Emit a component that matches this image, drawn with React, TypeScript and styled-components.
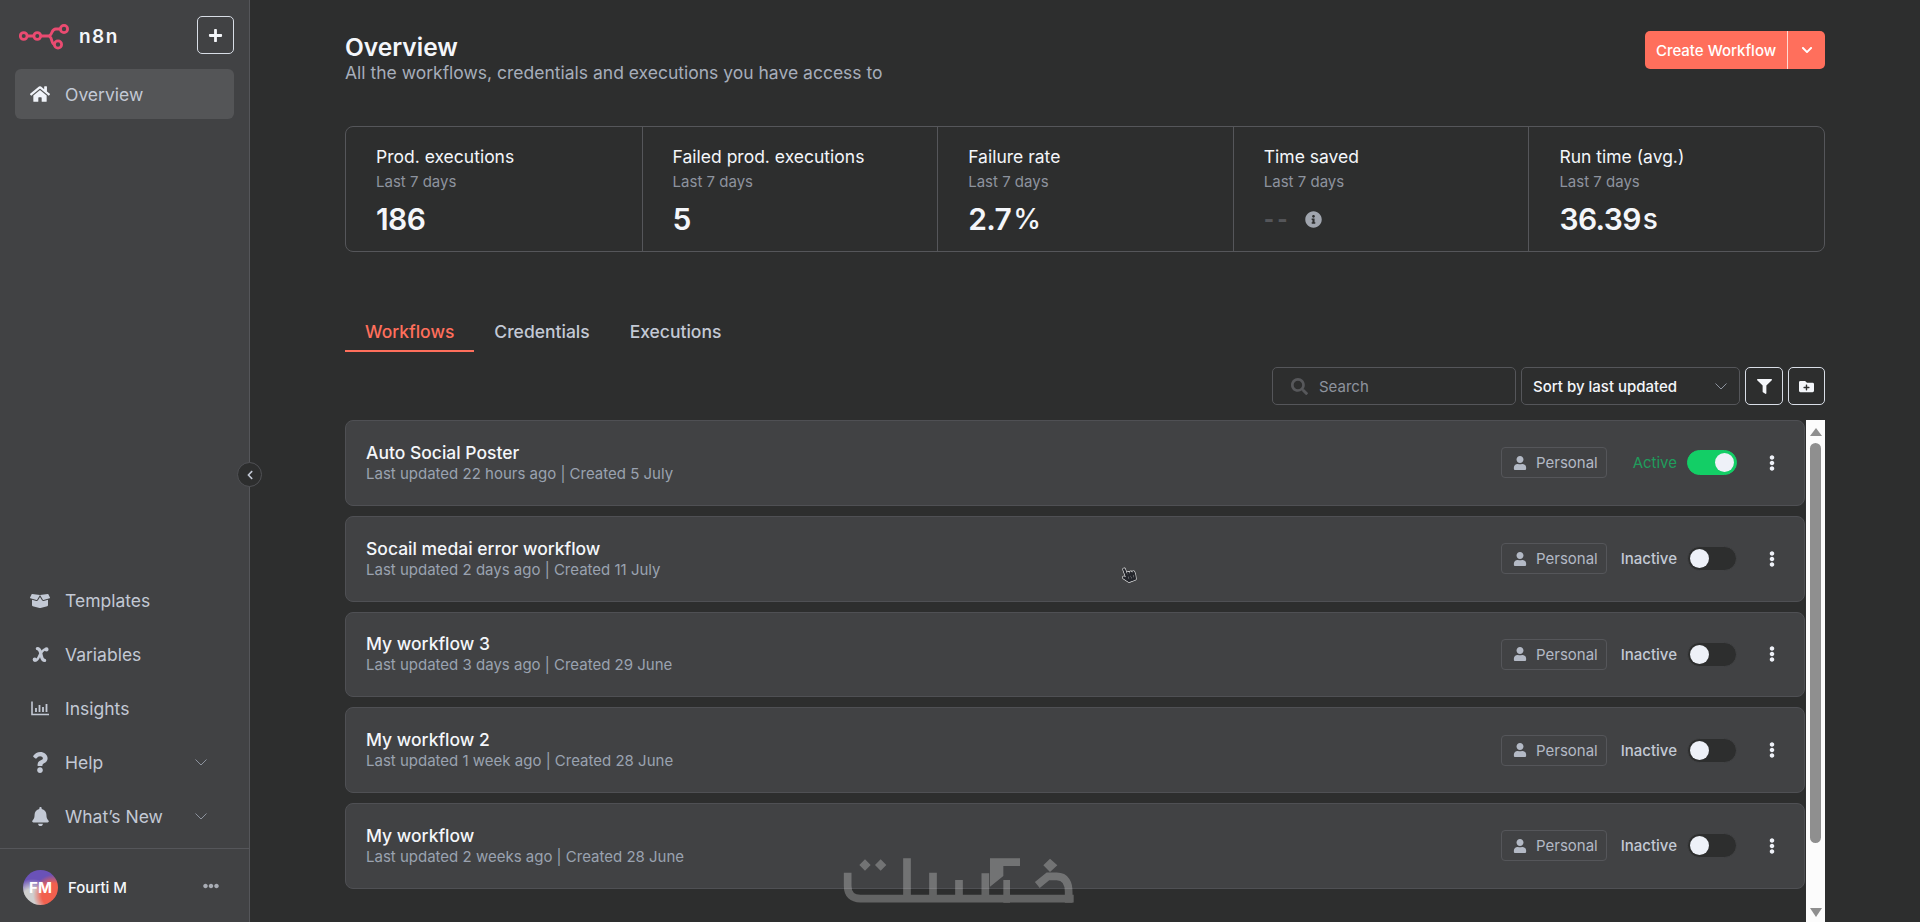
import React from "react";
import styled, { createGlobalStyle } from "styled-components";
import {
  FaHome, FaBoxOpen, FaQuestion, FaBell, FaPlus, FaChevronDown, FaUser, FaEllipsisV,
  FaFilter, FaFolderPlus, FaInfoCircle, FaSearch, FaChevronLeft, FaEllipsisH, FaHandPointer,
} from "react-icons/fa";

const Global = createGlobalStyle`
  html, body { margin: 0; padding: 0; height: 100%; overflow: hidden; background: #2d2e2e; }
  * { box-sizing: border-box; }
  body { font-family: Inter, "Liberation Sans", sans-serif; color: #f4f6fa; }
`;

const Page = styled.div`
  position: relative;
  display: flex;
  width: 100vw;
  height: 100vh;
  overflow: hidden;
  background: #2d2e2e;
`;

const Sidebar = styled.aside`
  width: 250px;
  flex: none;
  display: flex;
  flex-direction: column;
  background: #414244;
  border-right: 1px solid #55565a;
`;

const SideTop = styled.div`
  height: 69px;
  flex: none;
  display: flex;
  align-items: flex-start;
  justify-content: space-between;
  padding: 16px 15px 0 19px;
`;

const Brand = styled.div`
  display: flex;
  align-items: center;
  gap: 10px;
  height: 40px;
`;

const BrandName = styled.span`
  font-size: 19px;
  font-weight: 600;
  letter-spacing: 1.5px;
  color: #f4f6fa;
`;

const OutlineButton = styled.button<{ $w?: number }>`
  width: ${(p) => p.$w ?? 38}px;
  height: 38px;
  padding: 0;
  display: flex;
  align-items: center;
  justify-content: center;
  background: transparent;
  border: 1px solid #d8dde6;
  border-radius: 5px;
  color: #f4f6fa;
`;

const NavActive = styled.div`
  height: 50px;
  margin: 0 15px;
  padding-left: 15px;
  display: flex;
  align-items: center;
  gap: 15px;
  background: #545557;
  border-radius: 6px;
  font-size: 17.5px;
  color: #c3c9d5;
`;

const NavIcon = styled.span`
  width: 20px;
  flex: none;
  display: flex;
  align-items: center;
  justify-content: center;
  color: #c3c9d5;
`;

const HomeIcon = styled(NavIcon)`
  color: #f0f3f9;
`;

const Spacer = styled.div`
  flex: 1;
`;

const NavList = styled.nav`
  display: flex;
  flex-direction: column;
  padding-bottom: 5px;
`;

const NavItem = styled.div`
  height: 53.8px;
  padding: 0 42px 0 30px;
  display: flex;
  align-items: center;
  gap: 15px;
  font-size: 17.5px;
  color: #c3c9d5;
`;

const NavLabel = styled.span`
  flex: 1;
`;

const ThinChevron = styled.svg`
  width: 12px;
  height: 7px;
  fill: none;
  stroke: #8d939e;
  stroke-width: 1;
`;

const SideFooter = styled.div`
  height: 74px;
  flex: none;
  display: flex;
  align-items: center;
  padding: 0 30px 0 23px;
  gap: 10px;
  border-top: 1px solid #55565a;
`;

const Avatar = styled.div`
  width: 35px;
  height: 35px;
  margin-top: 3px;
  border-radius: 50%;
  display: flex;
  align-items: center;
  justify-content: center;
  font-size: 15px;
  font-weight: 700;
  color: #fff;
  background:
    radial-gradient(circle at 88% 72%, #f2604e 0 30%, transparent 52%),
    radial-gradient(circle at 28% 88%, #cfcfcf 0 30%, transparent 55%),
    linear-gradient(180deg, #6a52b8 0 50%, #a98a9c 100%);
`;

const UserName = styled.span`
  flex: 1;
  margin-top: 3px;
  font-size: 15px;
  font-weight: 500;
  color: #f4f6fa;
`;

const UserMore = styled.span`
  display: flex;
  color: #a8acb4;
`;

const Collapse = styled.button`
  position: absolute;
  left: 237px;
  top: 462px;
  width: 25px;
  height: 25px;
  padding: 0;
  border-radius: 50%;
  display: flex;
  align-items: center;
  justify-content: center;
  background: #2d2e2e;
  border: 1px solid #505155;
  color: #c3c9d5;
`;

const Main = styled.main`
  flex: 1;
  min-width: 0;
  display: flex;
  flex-direction: column;
  padding: 31px 95px 0 95px;
`;

const Header = styled.header`
  height: 95px;
  flex: none;
  display: flex;
  align-items: flex-start;
  justify-content: space-between;
`;

const HeaderText = styled.div`
  padding-top: 2px;
`;

const Title = styled.h1`
  margin: 0;
  font-size: 24.5px;
  line-height: 28px;
  font-weight: 600;
  color: #f4f6fa;
`;

const Subtitle = styled.p`
  margin: 2px 0 0;
  font-size: 17.5px;
  line-height: 20px;
  color: #a6adba;
`;

const SplitButton = styled.div`
  width: 180px;
  height: 38px;
  display: flex;
  background: #ff6f5c;
  border-radius: 5px;
  color: #fff;
`;

const SplitLabel = styled.span`
  flex: 1;
  display: flex;
  align-items: center;
  justify-content: center;
  font-size: 15px;
  font-weight: 500;
  border-right: 1px solid #ffd9d2;
`;

const SplitArrow = styled.span`
  width: 37px;
  display: flex;
  align-items: center;
  justify-content: center;
`;

const Stats = styled.section`
  height: 126px;
  flex: none;
  display: grid;
  grid-template-columns: repeat(5, 1fr);
  border: 1px solid #55565a;
  border-radius: 8px;
`;

const Stat = styled.div`
  padding: 18px 0 0 30px;
  & + & {
    border-left: 1px solid #55565a;
  }
`;

const StatTitle = styled.div`
  font-size: 17.5px;
  line-height: 24px;
  font-weight: 400;
  color: #f4f6fa;
`;

const StatSub = styled.div`
  font-size: 15px;
  line-height: 20px;
  margin-top: 3px;
  color: #8d939e;
`;

const StatValue = styled.div`
  display: flex;
  align-items: center;
  height: 40px;
  margin-top: 7px;
  font-size: 30px;
  font-weight: 600;
  letter-spacing: -0.6px;
  color: #f4f6fa;
`;

const Unit = styled.span`
  font-size: 28px;
  font-weight: 500;
  margin-left: 2px;
`;

const Dashes = styled.span`
  font-size: 22px;
  font-weight: 800;
  letter-spacing: 3px;
  color: #55565a;
  margin-right: 14px;
`;

const InfoWrap = styled.span`
  display: flex;
  color: #a0a5ae;
`;

const Tabs = styled.div`
  margin-top: 60px;
  height: 40px;
  flex: none;
  display: flex;
`;

const Tab = styled.div<{ $active?: boolean }>`
  padding: 0 20px;
  display: flex;
  align-items: center;
  font-size: 17.5px;
  font-weight: 500;
  color: ${(p) => (p.$active ? "#ff6f5c" : "#c3c9d5")};
  border-bottom: 2px solid ${(p) => (p.$active ? "#ff6f5c" : "transparent")};
`;

const Toolbar = styled.div`
  margin-top: 15px;
  height: 38px;
  flex: none;
  display: flex;
  justify-content: flex-end;
  gap: 5px;
`;

const SearchBox = styled.div`
  width: 244px;
  display: flex;
  align-items: center;
  gap: 11px;
  padding-left: 18px;
  border: 1px solid #55565a;
  border-radius: 5px;
  font-size: 15px;
  color: #8d939e;
`;

const SearchGlyph = styled.span`
  display: flex;
  color: #57585b;
`;

const Select = styled.div`
  width: 219px;
  display: flex;
  align-items: center;
  justify-content: space-between;
  padding: 0 12px 0 11px;
  border: 1px solid #55565a;
  border-radius: 5px;
  font-size: 15px;
  font-weight: 500;
  color: #f4f6fa;
`;

const ListArea = styled.div`
  flex: 1;
  min-height: 0;
  margin-top: 15px;
  display: flex;
`;

const Rows = styled.div`
  flex: 1;
  min-width: 0;
  display: flex;
  flex-direction: column;
  gap: 10px;
`;

const Row = styled.article`
  height: 85.75px;
  flex: none;
  display: flex;
  align-items: center;
  padding: 0 27px 0 20px;
  background: #414244;
  border: 1px solid #4f5054;
  border-radius: 8px;
`;

const RowText = styled.div`
  flex: 1;
`;

const RowTitle = styled.div`
  font-size: 17.5px;
  line-height: 22px;
  font-weight: 500;
  color: #f4f6fa;
`;

const RowMeta = styled.div`
  font-size: 15px;
  line-height: 20px;
  color: #9aa2b0;
`;

const Badge = styled.div`
  width: 106px;
  height: 31px;
  display: flex;
  align-items: center;
  gap: 9px;
  padding-left: 11px;
  border: 1px solid #55565a;
  border-radius: 4px;
  font-size: 15px;
  color: #b3b9c5;
`;

const Status = styled.span<{ $on?: boolean }>`
  width: 70px;
  margin-right: 10px;
  text-align: right;
  font-size: 15px;
  font-weight: ${(p) => (p.$on ? 400 : 500)};
  color: ${(p) => (p.$on ? "#1f9d5c" : "#c3c9d5")};
`;

const Toggle = styled.span<{ $on?: boolean }>`
  width: 50px;
  height: 25px;
  padding: 2px;
  display: flex;
  justify-content: ${(p) => (p.$on ? "flex-end" : "flex-start")};
  border-radius: 13px;
  background: ${(p) => (p.$on ? "#13ce66" : "#2d2e2e")};
  border: 1px solid ${(p) => (p.$on ? "#13ce66" : "#414244")};

  &::after {
    content: "";
    width: 19px;
    height: 19px;
    border-radius: 50%;
    background: #eef1f8;
  }
`;

const MoreDots = styled.span`
  width: 10px;
  margin-left: 30px;
  display: flex;
  justify-content: center;
  color: #eef1f8;
`;

const Scrollbar = styled.div`
  width: 19px;
  flex: none;
  margin-left: 1px;
  display: flex;
  flex-direction: column;
  align-items: center;
  padding-top: 8px;
  background: #fcfcfc;
`;

const ArrowUp = styled.span`
  width: 0;
  height: 0;
  border-left: 6px solid transparent;
  border-right: 6px solid transparent;
  border-bottom: 8px solid #8f8f8f;
`;

const ArrowDown = styled.span`
  width: 0;
  height: 0;
  margin: auto 0 5px;
  border-left: 6px solid transparent;
  border-right: 6px solid transparent;
  border-top: 9px solid #8f8f8f;
`;

const Thumb = styled.span`
  width: 11px;
  height: 400px;
  margin-top: 7px;
  border-radius: 6px;
  background: #8f8f8f;
`;

const Watermark = styled.svg`
  position: absolute;
  left: 840px;
  top: 850px;
  width: 240px;
  height: 60px;
  fill: none;
  stroke: #ffffff;
  opacity: 0.26;
  pointer-events: none;
`;

const PointerCursor = styled.span`
  position: absolute;
  left: 1121px;
  top: 567px;
  display: flex;
  color: #23252b;
  transform: rotate(-20deg);

  svg {
    stroke: #f2f2f2;
    stroke-width: 40px;
    paint-order: stroke;
    overflow: visible;
  }
`;

const Logo = () => (
  <svg width="50" height="27" viewBox="0 0 50 27" fill="none" stroke="#ea4b71" strokeWidth="2.8">
    <circle cx="4.7" cy="13" r="3.4" />
    <circle cx="18.3" cy="13" r="3.4" />
    <circle cx="45" cy="6" r="3.6" />
    <circle cx="39" cy="21.5" r="3.6" />
    <path d="M8.1 13h6.8M21.7 13h7.8M41.4 6h-4.6c-5 0-3.2 7-7.3 7 4.1 0 2.4 8.5 6 8.5" />
  </svg>
);

const VariableIcon = () => (
  <svg width="17" height="17" viewBox="0 0 16 16" fill="none" stroke="#c3c9d5" strokeLinecap="round">
    <path strokeWidth="3" d="M5 2.4c1.8 0 2.4 1.2 3 3.6l.9 3.8c.5 2.2 1.2 3.8 3 3.8" />
    <path strokeWidth="2.2" d="M14 3c-2.8-.8-6 3.4-7.2 6.4C6 11.4 4.4 14.6 2 13.4" />
    <circle cx="2.6" cy="12.8" r="1.1" fill="#c3c9d5" strokeWidth="1.8" />
    <circle cx="13.6" cy="3.2" r="1.1" fill="#c3c9d5" strokeWidth="1.8" />
  </svg>
);

const InsightsIcon = () => (
  <svg width="18" height="15" viewBox="0 0 18 15" fill="none" stroke="#c3c9d5">
    <path strokeWidth="1.6" d="M1 .5v13h17" />
    <path strokeWidth="1.8" d="M5 11V7M8.5 11V4M12 11V6M15.5 11V3" />
  </svg>
);

const FolderGlyph = () => <FaFolderPlus size={15} />;

const Chevron = () => (
  <ThinChevron viewBox="0 0 12 7">
    <path d="M.5.5 6 6 11.5.5" />
  </ThinChevron>
);

const stats = [
  { title: "Prod. executions", value: "186" },
  { title: "Failed prod. executions", value: "5" },
  { title: "Failure rate", value: "2.7", unit: "%" },
  { title: "Time saved", empty: true },
  { title: "Run time (avg.)", value: "36.39", unit: "s" },
];

const workflows = [
  { name: "Auto Social Poster", updated: "22 hours ago", created: "5 July", active: true },
  { name: "Socail medai error workflow", updated: "2 days ago", created: "11 July" },
  { name: "My workflow 3", updated: "3 days ago", created: "29 June" },
  { name: "My workflow 2", updated: "1 week ago", created: "28 June" },
  { name: "My workflow", updated: "2 weeks ago", created: "28 June" },
];

export default function App() {
  return (
    <Page>
      <Global />
      <Sidebar>
        <SideTop>
          <Brand>
            <Logo />
            <BrandName>n8n</BrandName>
          </Brand>
          <OutlineButton $w={37}>
            <FaPlus size={15} />
          </OutlineButton>
        </SideTop>
        <NavActive>
          <HomeIcon>
            <FaHome size={20} />
          </HomeIcon>
          Overview
        </NavActive>
        <Spacer />
        <NavList>
          <NavItem>
            <NavIcon><FaBoxOpen size={20} /></NavIcon>
            <NavLabel>Templates</NavLabel>
          </NavItem>
          <NavItem>
            <NavIcon><VariableIcon /></NavIcon>
            <NavLabel>Variables</NavLabel>
          </NavItem>
          <NavItem>
            <NavIcon><InsightsIcon /></NavIcon>
            <NavLabel>Insights</NavLabel>
          </NavItem>
          <NavItem>
            <NavIcon><FaQuestion size={21} /></NavIcon>
            <NavLabel>Help</NavLabel>
            <Chevron />
          </NavItem>
          <NavItem>
            <NavIcon><FaBell size={19} /></NavIcon>
            <NavLabel>What’s New</NavLabel>
            <Chevron />
          </NavItem>
        </NavList>
        <SideFooter>
          <Avatar>FM</Avatar>
          <UserName>Fourti M</UserName>
          <UserMore><FaEllipsisH size={16} /></UserMore>
        </SideFooter>
      </Sidebar>
      <Collapse>
        <FaChevronLeft size={10} />
      </Collapse>
      <Main>
        <Header>
          <HeaderText>
            <Title>Overview</Title>
            <Subtitle>All the workflows, credentials and executions you have access to</Subtitle>
          </HeaderText>
          <SplitButton>
            <SplitLabel>Create Workflow</SplitLabel>
            <SplitArrow><FaChevronDown size={12} /></SplitArrow>
          </SplitButton>
        </Header>
        <Stats>
          {stats.map((s) => (
            <Stat key={s.title}>
              <StatTitle>{s.title}</StatTitle>
              <StatSub>Last 7 days</StatSub>
              <StatValue>
                {s.empty ? (
                  <>
                    <Dashes>--</Dashes>
                    <InfoWrap><FaInfoCircle size={17} /></InfoWrap>
                  </>
                ) : (
                  <>
                    {s.value}
                    {s.unit && <Unit>{s.unit}</Unit>}
                  </>
                )}
              </StatValue>
            </Stat>
          ))}
        </Stats>
        <Tabs>
          <Tab $active>Workflows</Tab>
          <Tab>Credentials</Tab>
          <Tab>Executions</Tab>
        </Tabs>
        <Toolbar>
          <SearchBox>
            <SearchGlyph><FaSearch size={17} /></SearchGlyph>
            Search
          </SearchBox>
          <Select>
            Sort by last updated
            <Chevron />
          </Select>
          <OutlineButton><FaFilter size={15} /></OutlineButton>
          <OutlineButton $w={37}><FolderGlyph /></OutlineButton>
        </Toolbar>
        <ListArea>
          <Rows>
            {workflows.map((w) => (
              <Row key={w.name}>
                <RowText>
                  <RowTitle>{w.name}</RowTitle>
                  <RowMeta>Last updated {w.updated} | Created {w.created}</RowMeta>
                </RowText>
                <Badge>
                  <FaUser size={14} />
                  Personal
                </Badge>
                <Status $on={w.active}>{w.active ? "Active" : "Inactive"}</Status>
                <Toggle $on={w.active} />
                <MoreDots><FaEllipsisV size={16} /></MoreDots>
              </Row>
            ))}
          </Rows>
          <Scrollbar>
            <ArrowUp />
            <Thumb />
            <ArrowDown />
          </Scrollbar>
        </ListArea>
      </Main>
      <Watermark viewBox="0 0 720 180" aria-label="khamsat logo">
        <g fill="#fff" stroke="none">
          <path d="M75 28l17 17-17 17-17-17zM122 28l17 17-17 17-17-17zM630 26l22 20-22 20-20-20z" />
          <path d="M450 25h90v23h-50v30l-40 32zM490 90h20v68h-20z" />
        </g>
        <path strokeWidth="23" d="M23 68v40c0 26 14 38 38 38h640" />
        <path strokeWidth="23" d="M201 25v121M279 68v78M357 90v56M436 70v76" />
        <path strokeWidth="23" d="M592 105l32-26h26c28 0 36 22 36 46v33" />
      </Watermark>
      <PointerCursor>
        <FaHandPointer size={15} />
      </PointerCursor>
    </Page>
  );
}
